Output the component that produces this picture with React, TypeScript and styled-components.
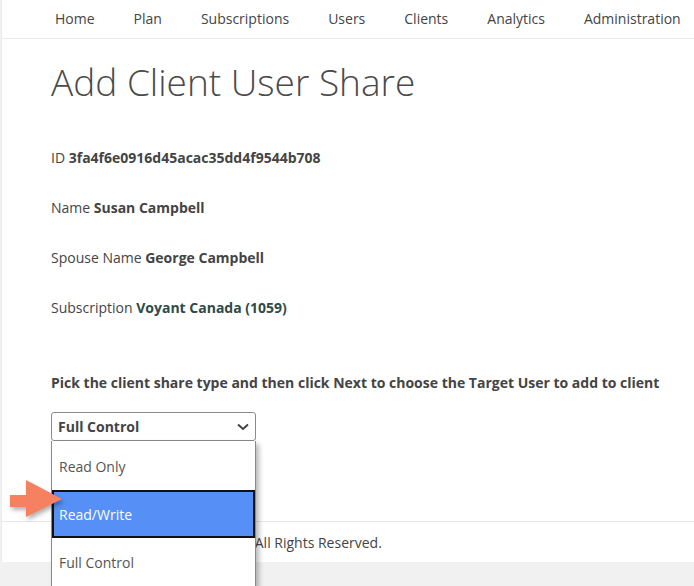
import { FC } from "react";
import styled, { createGlobalStyle } from "styled-components";

const GlobalStyle = createGlobalStyle`
    html, body {
        margin: 0;
        padding: 0;
        background: #f1f1f1;
        font-family: "Open Sans", "Liberation Sans", sans-serif;
        color: #444;
    }
`

const Layout = styled.div`
    min-height: 100vh;
    display: flex;
    flex-direction: column;
`

const Page = styled.div`
    background: #fff;
    border-left: 1px solid #ececec;
    margin-left: 1px;
`

const BottomBand = styled.div`
    flex: 1;
    min-height: 30px;
    background: #f1f1f1;
`

const Nav = styled.nav`
    display: flex;
    gap: 39px;
    height: 37px;
    align-items: center;
    padding: 0 0 1px 53px;
    border-bottom: 1px solid #e8e8e8;
    font-size: 14px;
    white-space: nowrap;
    overflow: hidden;

    & a {
        color: #444;
        text-decoration: none;
    }
`

const Content = styled.main`
    position: relative;
    z-index: 1;
    padding: 21px 0 0 49px;
    height: 461px;
`

const Title = styled.h1`
    margin: 0 0 44px;
    font-size: 37px;
    font-weight: 300;
    line-height: 44px;
    color: #4a4a4a;
`

const Field = styled.p`
    margin: 0 0 30px;
    font-size: 14px;
    line-height: 20px;
`

const Value = styled.b<{ tone?: string }>`
    font-weight: 700;
    color: ${({ tone }) => tone ?? "#444"};
`

const Instruction = styled.p`
    margin: 55px 0 19px;
    font-size: 14px;
    line-height: 20px;
    font-weight: 700;
`

const Dropdown = styled.div`
    position: relative;
    width: 205px;
`

const SelectBox = styled.div`
    height: 29px;
    border: 1px solid #8a8a8a;
    border-radius: 3px;
    display: flex;
    align-items: center;
    justify-content: space-between;
    padding: 0 6px;
    box-sizing: border-box;
    font-size: 14px;
    font-weight: 700;
    background: #fff;
`

const OptionList = styled.ul`
    position: absolute;
    left: 0;
    right: 0;
    top: 100%;
    margin: 0;
    padding: 1px 0 0;
    list-style: none;
    background: #fff;
    border: 1px solid #8a8a8a;
    border-top: none;
    box-shadow: 3px 3px 5px rgba(0, 0, 0, 0.28);
    z-index: 2;
`

const Option = styled.li<{ selected?: boolean }>`
    height: 48px;
    display: flex;
    align-items: center;
    padding: 0 5px;
    font-size: 14px;
    box-sizing: border-box;
    color: ${({ selected }) => (selected ? "#fff" : "#555")};
    background: ${({ selected }) => (selected ? "#5690f6" : "#fff")};
    border: 2px solid ${({ selected }) => (selected ? "#111" : "transparent")};
`

const Pointer = styled.svg`
    position: absolute;
    left: 6px;
    top: 437px;
    z-index: 3;
    filter: drop-shadow(2px 3px 2px rgba(0, 0, 0, 0.3));
`

const Footer = styled.footer`
    border-top: 1px solid #e6e6e6;
    height: 40px;
    display: flex;
    align-items: center;
    padding-left: 56px;
    font-size: 14px;
    color: #444;
`

const Chevron: FC = () => (
    <svg width="12" height="8" viewBox="0 0 12 8">
        <path d="M1 1.5 L6 6 L11 1.5" fill="none" stroke="#444" strokeWidth="2" />
    </svg>
)

const navItems = ["Home", "Plan", "Subscriptions", "Users", "Clients", "Analytics", "Administration"]
const options = ["Read Only", "Read/Write", "Full Control"]

const App: FC = () => {
    return (
        <>
            <GlobalStyle />
            <Layout>
                <Page>
                    <Nav>
                        {navItems.map((item) => (
                            <a key={item} href="#">{item}</a>
                        ))}
                    </Nav>
                    <Content>
                        <Title>Add Client User Share</Title>
                        <Field>ID <Value>3fa4f6e0916d45acac35dd4f9544b708</Value></Field>
                        <Field>Name <Value>Susan Campbell</Value></Field>
                        <Field>Spouse Name <Value>George Campbell</Value></Field>
                        <Field>Subscription <Value tone="#2f4b47">Voyant Canada (1059)</Value></Field>
                        <Instruction>
                            Pick the client share type and then click Next to choose the Target User to add to client
                        </Instruction>
                        <Dropdown>
                            <SelectBox>
                                <span>Full Control</span>
                                <Chevron />
                            </SelectBox>
                            <OptionList>
                                {options.map((opt) => (
                                    <Option key={opt} selected={opt === "Read/Write"}>{opt}</Option>
                                ))}
                            </OptionList>
                        </Dropdown>
                        <Pointer width="56" height="46" viewBox="0 0 56 46">
                            <path d="M2 19 L18 19 L18 4 L54 23 L18 41 L18 31 L2 31 Z" fill="#f58160" />
                        </Pointer>
                    </Content>
                    <Footer>Copyright © 2024 Voyant, Inc. All Rights Reserved.</Footer>
                </Page>
                <BottomBand />
            </Layout>
        </>
    )
}

export default App
